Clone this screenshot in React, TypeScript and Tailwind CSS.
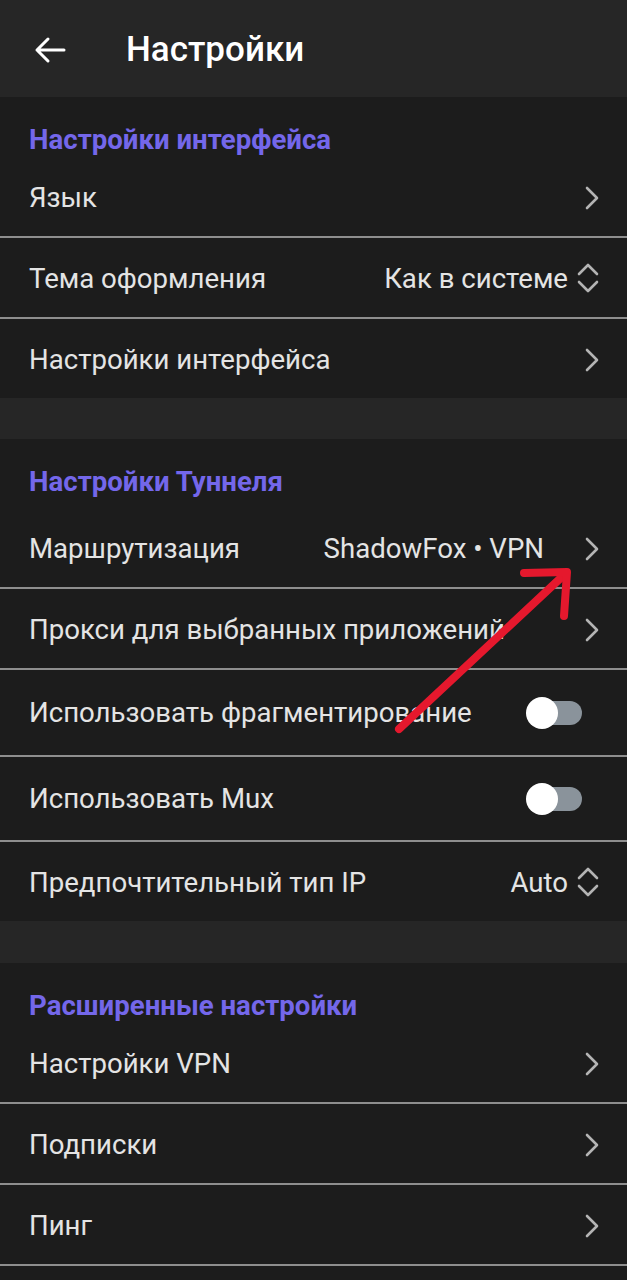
import React from "react";

const ChevronRight = () => (
  <svg width="16" height="26" viewBox="0 0 16 26" fill="none" className="shrink-0">
    <path d="M3 3 L13 13 L3 23" stroke="#b4b4b4" strokeWidth="2.6" strokeLinecap="round" strokeLinejoin="round" />
  </svg>
);

const ChevronUpDown = () => (
  <svg width="24" height="34" viewBox="0 0 24 34" fill="none" className="shrink-0">
    <path d="M3 13 L12 4 L21 13" stroke="#b4b4b4" strokeWidth="2.6" strokeLinecap="round" strokeLinejoin="round" />
    <path d="M3 21 L12 30 L21 21" stroke="#b4b4b4" strokeWidth="2.6" strokeLinecap="round" strokeLinejoin="round" />
  </svg>
);

const Toggle = () => (
  <div className="relative w-[56px] h-[34px] flex items-center shrink-0 mr-[18px]">
    <div className="ml-[10px] w-[46px] h-[24px] rounded-full bg-[#8a939b]" />
    <div className="absolute left-0 top-[1px] w-[32px] h-[32px] rounded-full bg-white" />
  </div>
);

type RowProps = {
  label: string;
  value?: string;
  kind: "chevron" | "select" | "toggle";
  h?: string;
  last?: boolean;
};

const Row = ({ label, value, kind, h = "h-[79px] pt-[2px]", last }: RowProps) => (
  <>
    <div className={`${h} flex items-center justify-between pl-[29px] pr-[27px]`}>
      <span className="text-[27.6px] text-[#e4e4e4] whitespace-nowrap">{label}</span>
      <div className="flex items-center gap-[8px]">
        {value && <span className="text-[27.6px] text-[#e4e4e4] whitespace-nowrap">{value}</span>}
        {kind === "chevron" && <div className={value ? "ml-[32px]" : ""}><ChevronRight /></div>}
        {kind === "select" && <ChevronUpDown />}
        {kind === "toggle" && <Toggle />}
      </div>
    </div>
    {!last && <div className="h-[2px] bg-[#8e8e8e]" />}
  </>
);

const SectionTitle = ({ children }: { children: React.ReactNode }) => (
  <div className="h-[60px] pt-[29px] pl-[29px]">
    <h2 className="text-[27.6px] leading-[28px] font-bold text-[#7467ea] whitespace-nowrap">{children}</h2>
  </div>
);

export default function App() {
  return (
    <div className="relative w-[627px] h-[1280px] overflow-hidden bg-[#262626]" style={{ fontFamily: "Roboto, 'Noto Sans', sans-serif" }}>
      {/* top bar */}
      <div className="h-[97px] flex items-center bg-[#262626]">
        <svg width="32" height="28" viewBox="0 0 32 28" fill="none" className="ml-[34px] mt-[2px]">
          <path d="M30 14 H3 M14 3 L3 14 L14 25" stroke="#ffffff" strokeWidth="3" strokeLinecap="round" strokeLinejoin="round" />
        </svg>
        <h1 className="ml-[60px] mt-[3px] text-[35px] font-medium text-white">Настройки</h1>
      </div>

      {/* interface */}
      <section className="bg-[#1c1c1c]">
        <SectionTitle>Настройки интерфейса</SectionTitle>
        <Row label="Язык" kind="chevron" />
        <Row label="Тема оформления" value="Как в системе" kind="select" />
        <Row label="Настройки интерфейса" kind="chevron" last />
      </section>

      <div className="h-[41px]" />

      {/* tunnel */}
      <section className="bg-[#1c1c1c]">
        <SectionTitle>Настройки Туннеля</SectionTitle>
        <Row label="Маршрутизация" value="ShadowFox • VPN" kind="chevron" h="h-[88px] pt-[12px]" />
        <Row label="Прокси для выбранных приложений" kind="chevron" />
        <Row label="Использовать фрагментирование" kind="toggle" h="h-[85px]" />
        <Row label="Использовать Mux" kind="toggle" h="h-[83px]" />
        <Row label="Предпочтительный тип IP" value="Auto" kind="select" last />
      </section>

      <div className="h-[42px]" />

      {/* advanced */}
      <section className="bg-[#1c1c1c]">
        <SectionTitle>Расширенные настройки</SectionTitle>
        <Row label="Настройки VPN" kind="chevron" />
        <Row label="Подписки" kind="chevron" />
        <Row label="Пинг" kind="chevron" />
        <div className="h-[40px]" />
      </section>

      {/* red annotation arrow */}
      <svg className="absolute left-0 top-0 pointer-events-none" width="627" height="1280" viewBox="0 0 627 1280" fill="none">
        <path d="M399 729 L565 574" stroke="#e5182d" strokeWidth="8" strokeLinecap="round" />
        <path d="M524 573 L567 572 L564 616" stroke="#e5182d" strokeWidth="8" strokeLinecap="round" strokeLinejoin="round" />
      </svg>
    </div>
  );
}
